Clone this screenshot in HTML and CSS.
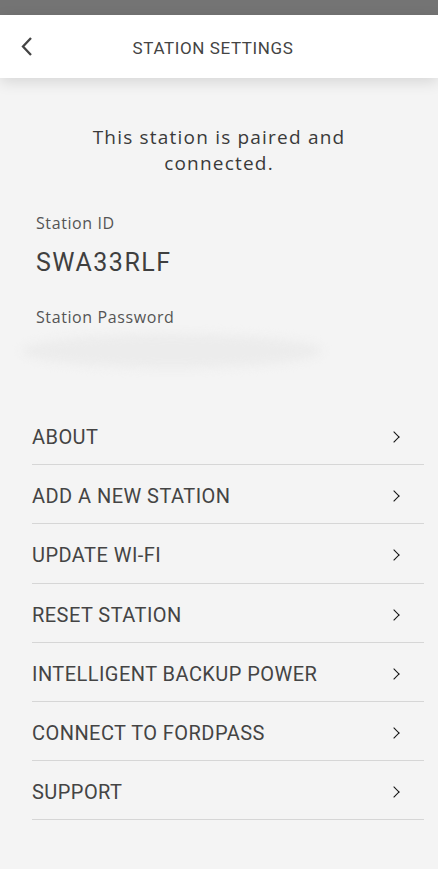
FILE: index.html
```html
<!DOCTYPE html>
<html lang="en">
<head>
    <meta charset="UTF-8">
    <meta name="viewport" content="width=device-width, initial-scale=1.0">
    <title>Station Settings</title>
    <link rel="stylesheet" href="styles.css">
</head>
<body>
    <div class="status-bar"></div>

    <!-- Шапка -->
    <div class="top-bar">
        <svg class="back" width="14" height="22" viewBox="0 0 14 22">
            <path d="M11 3 L3 11.5 L11 20" fill="none" stroke="#444" stroke-width="2.3"/>
        </svg>
        <h1>STATION SETTINGS</h1>
    </div>

    <p class="status-text">This station is paired and<br>connected.</p>

    <div class="info">
        <div class="label">Station ID</div>
        <div class="value">SWA33RLF</div>
        <div class="label label-pass">Station Password</div>
        <div class="smudge"></div>
    </div>

    <!-- Меню -->
    <ul class="menu">
        <li>ABOUT <span class="arrow"></span></li>
        <li>ADD A NEW STATION <span class="arrow"></span></li>
        <li>UPDATE WI-FI <span class="arrow"></span></li>
        <li>RESET STATION <span class="arrow"></span></li>
        <li>INTELLIGENT BACKUP POWER <span class="arrow"></span></li>
        <li>CONNECT TO FORDPASS <span class="arrow"></span></li>
        <li>SUPPORT <span class="arrow"></span></li>
    </ul>
</body>
</html>
```
FILE: styles.css
```css
body {
    margin: 0;
    background-color: #f4f4f4;
    font-family: Roboto, "Open Sans", sans-serif;
    color: #444444;
    overflow: hidden;
}

.status-bar {
    height: 15px;
    background: #747474;
}

.top-bar {
    height: 63px;
    background: #ffffff;
    display: flex;
    align-items: center;
    justify-content: center;
    position: relative;
    box-shadow: 0 4px 14px rgba(0, 0, 0, 0.12);
}

.top-bar .back {
    position: absolute;
    left: 20px;
    top: 20px;
}

.top-bar h1 {
    margin: 0;
    font-size: 17px;
    font-weight: 400;
    letter-spacing: 0.6px;
    color: #444444;
    padding-top: 3px;
    padding-right: 12px;
}

.status-text {
    margin: 46px 0 0;
    text-align: center;
    font-family: "Open Sans", sans-serif;
    font-size: 19px;
    line-height: 26px;
    letter-spacing: 1.2px;
    color: #3a3a3a;
}

.info {
    padding: 0 36px;
    margin-top: 36px;
}

.label {
    font-family: "Open Sans", sans-serif;
    font-size: 16px;
    letter-spacing: 0.6px;
    color: #555555;
    line-height: 22px;
}

.value {
    font-size: 25px;
    letter-spacing: 1.5px;
    color: #3f3f3f;
    margin-top: 14px;
    line-height: 30px;
}

.label-pass {
    margin-top: 28px;
}

.smudge {
    height: 34px;
    margin: 6px 80px 0 -14px;
    background: #ececec;
    border-radius: 50%;
    filter: blur(5px);
}

.menu {
    list-style: none;
    margin: 38px 14px 0 32px;
    padding: 0;
}

.menu li {
    border-bottom: 1px solid #d6d6d6;
    display: flex;
    align-items: center;
    justify-content: space-between;
    padding-top: 4px;
    box-sizing: border-box;
    height: 59.2px;
    font-size: 20px;
    letter-spacing: 0.45px;
    color: #444444;
}

.arrow {
    width: 7px;
    height: 7px;
    border-top: 1.6px solid #111111;
    border-right: 1.6px solid #111111;
    transform: rotate(45deg);
    margin-right: 26px;
}
```
